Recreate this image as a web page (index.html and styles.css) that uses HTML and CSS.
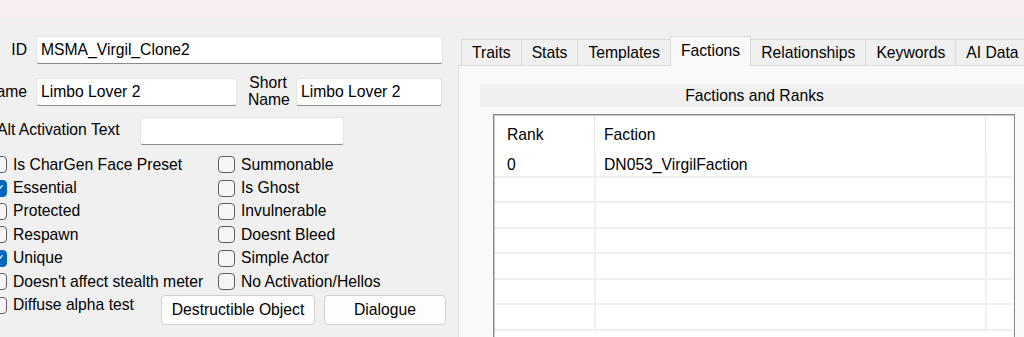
FILE: index.html
```html
<!DOCTYPE html>
<html>
<head>
<meta charset="utf-8">
<link rel="stylesheet" href="styles.css">
</head>
<body>
<div class="titlebar"><span class="title-clip">mm:</span></div>
<div class="main">
  <div class="left">
    <div class="row">
      <div class="lbl">ID</div>
      <div class="field f-id">MSMA_Virgil_Clone2</div>
    </div>
    <div class="row row-name">
      <div class="lbl">Name</div>
      <div class="field f-name">Limbo Lover 2</div>
      <div class="short-lbl">Short<br>Name</div>
      <div class="field f-short">Limbo Lover 2</div>
    </div>
    <div class="row row-alt">
      <div class="alt-lbl">Alt Activation Text</div>
      <div class="field f-alt"></div>
    </div>
    <div class="checks">
      <label class="cbrow"><span class="cb"></span>Is CharGen Face Preset</label>
      <label class="cbrow"><span class="cb"></span>Summonable</label>
      <label class="cbrow"><span class="cb on"><svg viewBox="0 0 16 16" width="13" height="13"><path d="M3.5 8.5l3 3 6-7" fill="none" stroke="#fff" stroke-width="1.6" stroke-linecap="round" stroke-linejoin="round"/></svg></span>Essential</label>
      <label class="cbrow"><span class="cb"></span>Is Ghost</label>
      <label class="cbrow"><span class="cb"></span>Protected</label>
      <label class="cbrow"><span class="cb"></span>Invulnerable</label>
      <label class="cbrow"><span class="cb"></span>Respawn</label>
      <label class="cbrow"><span class="cb"></span>Doesnt Bleed</label>
      <label class="cbrow"><span class="cb on"><svg viewBox="0 0 16 16" width="13" height="13"><path d="M3.5 8.5l3 3 6-7" fill="none" stroke="#fff" stroke-width="1.6" stroke-linecap="round" stroke-linejoin="round"/></svg></span>Unique</label>
      <label class="cbrow"><span class="cb"></span>Simple Actor</label>
      <label class="cbrow"><span class="cb"></span>Doesn't affect stealth meter</label>
      <label class="cbrow"><span class="cb"></span>No Activation/Hellos</label>
      <div class="lastrow">
        <label class="cbrow diffuse"><span class="cb"></span>Diffuse alpha test</label>
        <button class="btn btn-destr">Destructible Object</button>
        <button class="btn btn-dlg">Dialogue</button>
      </div>
    </div>
  </div>
  <div class="right">
    <div class="tabs">
      <div class="tab">Traits</div>
      <div class="tab">Stats</div>
      <div class="tab">Templates</div>
      <div class="tab active">Factions</div>
      <div class="tab">Relationships</div>
      <div class="tab">Keywords</div>
      <div class="tab">AI Data</div>
    </div>
    <div class="panel">
      <div class="grouphdr">Factions and Ranks</div>
      <div class="list">
        <div class="lh">
          <div class="hc hc1">Rank</div>
          <div class="hc hc2">Faction</div>
        </div>
        <div class="lr"><div class="c c1">0</div><div class="c c2">DN053_VirgilFaction</div><div class="c c3"></div></div>
        <div class="lr"><div class="c c1"></div><div class="c c2"></div><div class="c c3"></div></div>
        <div class="lr"><div class="c c1"></div><div class="c c2"></div><div class="c c3"></div></div>
        <div class="lr"><div class="c c1"></div><div class="c c2"></div><div class="c c3"></div></div>
        <div class="lr"><div class="c c1"></div><div class="c c2"></div><div class="c c3"></div></div>
        <div class="lr"><div class="c c1"></div><div class="c c2"></div><div class="c c3"></div></div>
        <div class="lr"><div class="c c1"></div><div class="c c2"></div><div class="c c3"></div></div>
      </div>
    </div>
  </div>
</div>
</body>
</html>
```

FILE: styles.css
```css
* { box-sizing: border-box; }
html, body { margin: 0; }
body {
  background: #f0f0f0;
  font-family: "Liberation Sans", Arial, sans-serif;
  font-size: 15.7px;
  color: #000;
  width: 1024px;
  height: 337px;
  overflow: hidden;
}
.titlebar {
  height: 17px;
  background: #f9eff0;
  overflow: hidden;
}
.title-clip {
  display: block;
  margin-top: -13px;
  line-height: 17px;
  font-size: 14px;
  color: #222;
}
.main {
  display: flex;
  align-items: flex-start;
  height: 320px;
  overflow: hidden;
}
.left {
  flex: none;
  width: 486px;
  margin-left: -40px;
  margin-top: 19px;
}
.row {
  display: flex;
  align-items: center;
  height: 28px;
}
.lbl {
  flex: none;
  width: 76px;
  display: flex;
  justify-content: flex-end;
  padding-right: 9px;
  white-space: nowrap;
}
.field {
  flex: none;
  height: 28px;
  background: #fff;
  border: 1px solid #e4e4e4;
  border-bottom-color: #8a8a8a;
  border-radius: 3px;
  padding: 0 4px;
  display: flex;
  align-items: center;
  white-space: nowrap;
}
.f-id { width: 407px; }
.row-name { margin-top: 14px; }
.f-name { width: 201px; }
.short-lbl {
  flex: none;
  width: 40px;
  margin-left: 11px;
  margin-top: -3px;
  line-height: 17px;
  text-align: center;
}
.f-short { width: 146px; margin-left: 8px; }
.row-alt { margin-top: 11px; }
.alt-lbl {
  flex: none;
  width: 180px;
  padding-left: 37px;
  padding-bottom: 3px;
  white-space: nowrap;
}
.f-alt { width: 204px; }

.checks {
  margin-top: 8px;
  margin-left: 30px;
  display: grid;
  grid-template-columns: 228px 228px;
  grid-auto-rows: 23.4px;
}
.cbrow {
  display: flex;
  align-items: center;
  gap: 6px;
  white-space: nowrap;
}
.cb {
  flex: none;
  width: 17px;
  height: 17px;
  border: 1px solid #5e5e5e;
  border-radius: 4px;
  background: #f6f6f6;
  display: flex;
  align-items: center;
  justify-content: center;
}
.cb.on {
  background: #0067c0;
  border-color: #0067c0;
}
.lastrow {
  grid-column: 1 / -1;
  display: flex;
  align-items: flex-start;
}
.diffuse {
  flex: none;
  width: 171px;
  height: 23.4px;
}
.btn {
  flex: none;
  height: 30px;
  margin-top: 2px;
  background: #fdfdfd;
  border: 1px solid #d2d2d2;
  border-radius: 4px;
  font: inherit;
  color: #000;
  padding: 0;
  display: flex;
  align-items: center;
  justify-content: center;
}
.btn-destr { width: 154px; }
.btn-dlg { width: 122px; margin-left: 9px; }

.right {
  flex: none;
  width: 600px;
  margin-left: 12px;
  margin-top: 19px;
}
.tabs {
  display: flex;
  align-items: flex-end;
  height: 29px;
  padding-left: 3px;
  position: relative;
  z-index: 1;
}
.tab {
  flex: none;
  height: 26px;
  padding: 0 10px;
  border: 1px solid #dadada;
  border-bottom: none;
  background: #f0f0f0;
  display: flex;
  align-items: center;
  white-space: nowrap;
  margin-right: -1px;
}
.tab.active {
  height: 30px;
  margin-bottom: -1px;
  background: #f9f9f9;
  border-color: #dcdcdc;
  padding-bottom: 2px;
}
.panel {
  background: #f9f9f9;
  border: 1px solid #dcdcdc;
  border-bottom: none;
  height: 272px;
  padding: 18px 0 0 21px;
}
.grouphdr {
  width: 549px;
  height: 23px;
  background: #f0f0f0;
  display: flex;
  align-items: center;
  justify-content: center;
}
.list {
  margin-top: 7px;
  margin-left: 13px;
  width: 522px;
  height: 223px;
  background: #fff;
  border: 1px solid #868a91;
  border-bottom: none;
  box-shadow: inset 1px 1px 0 #c6c9ce;
  padding: 1px 1px 0 1px;
  overflow: hidden;
}
.lh {
  display: flex;
  height: 36px;
}
.hc {
  flex: none;
  height: 36px;
  display: flex;
  align-items: center;
  border-right: 1px solid #e4e4e4;
  padding-top: 2px;
}
.hc1 { width: 100px; padding-left: 12px; }
.hc2 { width: 391px; padding-left: 9px; }
.lr {
  display: flex;
  height: 25.5px;
  border-bottom: 2px solid #f0f0f0;
}
.c {
  flex: none;
  height: 100%;
  display: flex;
  align-items: center;
  white-space: nowrap;
  padding-top: 2px;
}
.c1 { width: 101px; padding-left: 12px; border-right: 2px solid #f0f0f0; }
.c2 { width: 391px; padding-left: 8px; border-right: 2px solid #f0f0f0; }
.c3 { flex: 1; }
```
